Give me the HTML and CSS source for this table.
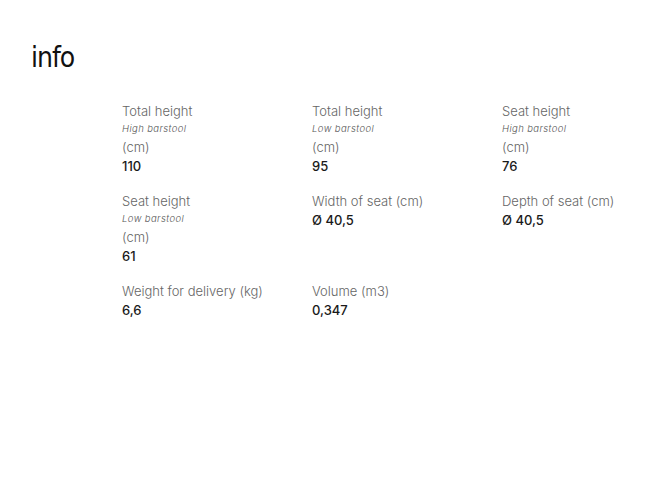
FILE: index.html
```html
<!DOCTYPE html>
<html>
<head>
<meta charset="utf-8">
<link rel="stylesheet" href="styles.css">
</head>
<body>
<div class="page">
  <h2 class="title">info</h2>
  <div class="grid">
    <div class="item">
      <div class="label">Total height</div>
      <div class="sub">High barstool</div>
      <div class="label">(cm)</div>
      <div class="value">110</div>
    </div>
    <div class="item">
      <div class="label">Total height</div>
      <div class="sub">Low barstool</div>
      <div class="label">(cm)</div>
      <div class="value">95</div>
    </div>
    <div class="item">
      <div class="label">Seat height</div>
      <div class="sub">High barstool</div>
      <div class="label">(cm)</div>
      <div class="value">76</div>
    </div>
    <div class="item">
      <div class="label">Seat height</div>
      <div class="sub">Low barstool</div>
      <div class="label">(cm)</div>
      <div class="value">61</div>
    </div>
    <div class="item">
      <div class="label">Width of seat (cm)</div>
      <div class="value">Ø 40,5</div>
    </div>
    <div class="item">
      <div class="label">Depth of seat (cm)</div>
      <div class="value">Ø 40,5</div>
    </div>
    <div class="item">
      <div class="label">Weight for delivery (kg)</div>
      <div class="value">6,6</div>
    </div>
    <div class="item">
      <div class="label">Volume (m3)</div>
      <div class="value">0,347</div>
    </div>
  </div>
</div>
</body>
</html>
```
FILE: styles.css
```css
html, body {
  margin: 0;
  padding: 0;
  background: #fff;
}
.page {
  padding: 40px 0 0 31px;
  font-family: "Inter", "Liberation Sans", Arial, sans-serif;
}
.title {
  margin: 0;
  font-family: "DejaVu Sans Condensed", "DejaVu Sans", sans-serif;
  font-stretch: condensed;
  font-weight: 400;
  font-size: 28px;
  line-height: 36px;
  color: #111;
  letter-spacing: -1px;
}
.grid {
  display: grid;
  grid-template-columns: 190px 190px 140px;
  row-gap: 16px;
  margin: 26px 0 0 91px;
}
.label {
  font-size: 13px;
  line-height: 18px;
  font-weight: 300;
  color: #666;
  white-space: nowrap;
}
.sub {
  font-size: 9.5px;
  line-height: 18px;
  font-style: italic;
  font-weight: 300;
  letter-spacing: 0.4px;
  color: #555;
  white-space: nowrap;
}
.value {
  font-size: 13px;
  line-height: 20px;
  font-weight: 500;
  color: #1a1a1a;
  white-space: nowrap;
}
```
